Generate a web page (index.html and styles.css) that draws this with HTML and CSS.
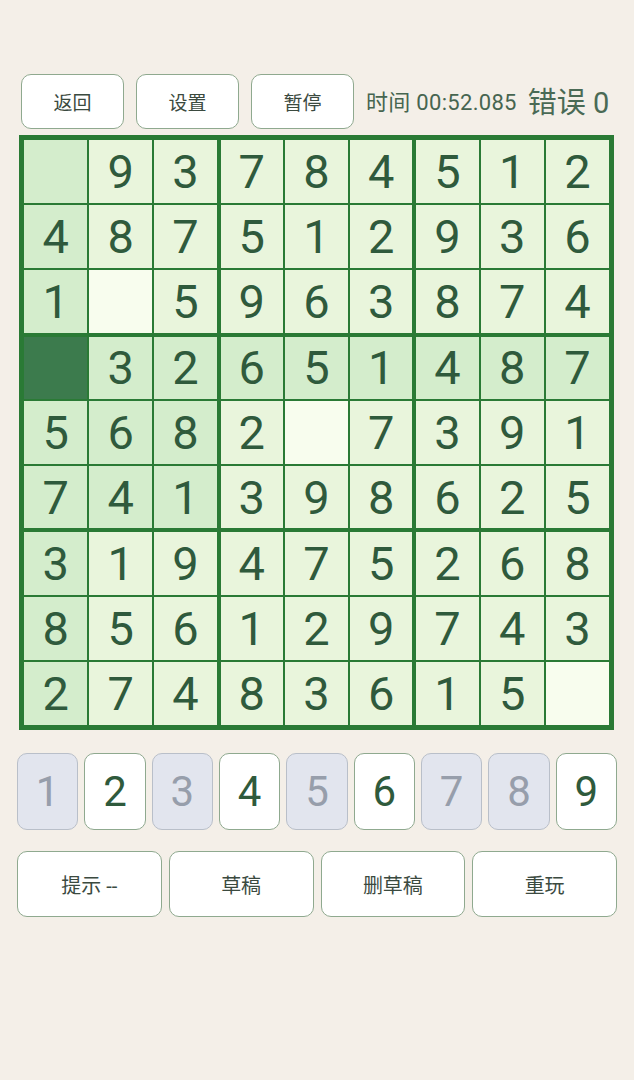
FILE: index.html
```html
<!DOCTYPE html>
<html lang="zh">
<head>
  <meta charset="UTF-8" />
  <meta name="viewport" content="width=device-width, initial-scale=1.0" />
  <title>数独</title>
  <link rel="stylesheet" href="styles.css">
</head>
<body>

  <div class="app">
    <div class="top-bar">
      <button class="top-btn">返回</button>
      <button class="top-btn">设置</button>
      <button class="top-btn">暂停</button>
      <span class="timer">时间 00:52.085</span>
      <span class="errors">错误 0</span>
    </div>

    <div class="board" id="board"></div>

    <div class="num-pad" id="numPad"></div>

    <div class="actions">
      <button class="action-btn">提示 --</button>
      <button class="action-btn">草稿</button>
      <button class="action-btn">删草稿</button>
      <button class="action-btn">重玩</button>
    </div>
  </div>

  <script>
    // 0 = 空格
    const puzzle = [
      [0, 9, 3, 7, 8, 4, 5, 1, 2],
      [4, 8, 7, 5, 1, 2, 9, 3, 6],
      [1, 0, 5, 9, 6, 3, 8, 7, 4],
      [0, 3, 2, 6, 5, 1, 4, 8, 7],
      [5, 6, 8, 2, 0, 7, 3, 9, 1],
      [7, 4, 1, 3, 9, 8, 6, 2, 5],
      [3, 1, 9, 4, 7, 5, 2, 6, 8],
      [8, 5, 6, 1, 2, 9, 7, 4, 3],
      [2, 7, 4, 8, 3, 6, 1, 5, 0]
    ];
    const selected = { r: 3, c: 0 };
    const doneNums = [1, 3, 5, 7, 8];

    const board = document.getElementById('board');
    for (let r = 0; r < 9; r++) {
      for (let c = 0; c < 9; c++) {
        const cell = document.createElement('div');
        cell.className = 'cell';
        if (c === 2 || c === 5) cell.classList.add('box-right');
        if (c === 3 || c === 6) cell.classList.add('box-left');
        if (r === 2 || r === 5) cell.classList.add('box-bottom');
        if (r === 3 || r === 6) cell.classList.add('box-top');

        const sameBox = Math.floor(r / 3) === Math.floor(selected.r / 3) &&
                        Math.floor(c / 3) === Math.floor(selected.c / 3);
        if (r === selected.r && c === selected.c) {
          cell.classList.add('selected');
        } else if (r === selected.r || c === selected.c || sameBox) {
          cell.classList.add('related');
        } else if (!puzzle[r][c]) {
          cell.classList.add('empty');
        }

        cell.innerText = puzzle[r][c] || '';
        board.appendChild(cell);
      }
    }

    const pad = document.getElementById('numPad');
    for (let n = 1; n <= 9; n++) {
      const btn = document.createElement('button');
      btn.className = 'num-btn' + (doneNums.includes(n) ? ' done' : '');
      btn.innerText = n;
      pad.appendChild(btn);
    }
  </script>
</body>
</html>
```

FILE: styles.css
```css
body {
  margin: 0;
  background: #f4efe8;
  font-family: Roboto, "Noto Sans CJK SC", sans-serif;
  color: #2f5a3c;
}
.app {
  padding: 74px 17px 0;
}
button {
  font-family: Roboto, "Noto Sans CJK SC", sans-serif;
  background: #fff;
  border: 1px solid #8fa98f;
  border-radius: 10px;
  cursor: pointer;
  padding: 0;
}
.top-bar {
  display: flex;
  align-items: center;
  gap: 12px;
  padding-left: 4px;
  height: 55px;
}
.top-btn {
  flex: none;
  width: 103px;
  height: 55px;
  font-size: 19px;
  color: #3b4a3f;
}
.timer {
  font-size: 22px;
  color: #466550;
  white-space: nowrap;
  letter-spacing: 0.3px;
  margin-top: -3px;
}
.errors {
  margin-left: -1px;
  margin-top: -3px;
  font-size: 29px;
  color: #4a6a55;
  white-space: nowrap;
}
.board {
  display: grid;
  grid-template-columns: repeat(9, 1fr);
  grid-template-rows: repeat(9, 1fr);
  width: 595px;
  height: 595px;
  box-sizing: border-box;
  margin: 6px 0 0 2px;
  border: 4px solid #2a7a35;
  background: #2a7a35;
}
.cell {
  display: flex;
  align-items: center;
  justify-content: center;
  border: 1px solid #2a7a35;
  background: #e9f5dc;
  font-size: 47px;
  color: #2f5a3c;
  line-height: 1;
}
.cell.box-right { border-right-width: 2px; }
.cell.box-left { border-left-width: 2px; }
.cell.box-bottom { border-bottom-width: 2px; }
.cell.box-top { border-top-width: 2px; }
.cell.related {
  background: #d4edcc;
}
.cell.empty {
  background: #f8fdee;
}
.cell.selected {
  background: #3c7b4d;
}
.num-pad {
  display: grid;
  grid-template-columns: repeat(9, 1fr);
  gap: 6px;
  margin-top: 23px;
}
.num-btn {
  height: 77px;
  font-size: 42px;
  color: #2f5a3c;
}
.num-btn.done {
  background: #e2e5ee;
  border-color: #b9bfc9;
  color: #979eab;
}
.actions {
  display: grid;
  grid-template-columns: repeat(4, 1fr);
  gap: 7px;
  margin-top: 21px;
}
.action-btn {
  height: 66px;
  font-size: 20px;
  color: #3b4a3f;
}
```
